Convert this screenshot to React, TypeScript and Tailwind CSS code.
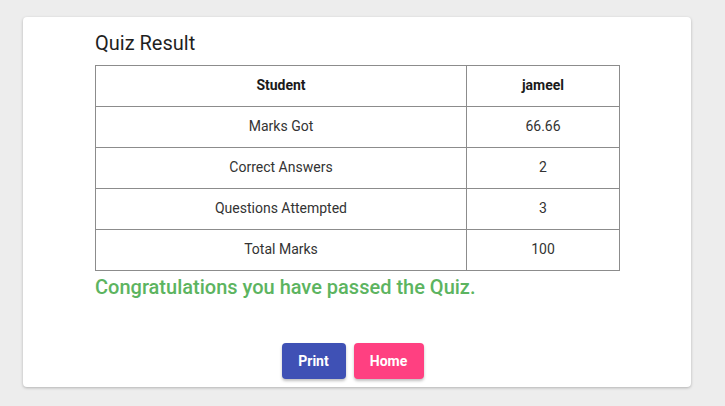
const rows: [string, string][] = [
  ["Marks Got", "66.66"],
  ["Correct Answers", "2"],
  ["Questions Attempted", "3"],
  ["Total Marks", "100"],
];

export default function App() {
  return (
    <div
      className="min-h-[406px] bg-[#ededed] pt-[17px] pb-[19px] pl-[23px] pr-[34px]"
      style={{ fontFamily: "Roboto, 'Liberation Sans', sans-serif" }}
    >
      <div className="bg-white rounded-[4px] shadow-[0_1px_3px_rgba(0,0,0,0.25)] h-[370px] pl-[72px] pr-[71px] pt-[13px]">
        <h2 className="text-[20px] leading-[26px] text-[#1f1f1f] mb-[9px]">Quiz Result</h2>
        <table className="w-[525px] border-collapse text-[14px] text-[#333]">
          <thead>
            <tr className="h-[41px]">
              <th className="border border-[#8c8c8c] w-[371px] font-bold text-[#1a1a1a] pb-[2px]">Student</th>
              <th className="border border-[#8c8c8c] font-bold text-[#1a1a1a] pb-[2px]">jameel</th>
            </tr>
          </thead>
          <tbody>
            {rows.map(([k, v]) => (
              <tr key={k} className="h-[41px]">
                <td className="border border-[#8c8c8c] text-center pb-[2px]">{k}</td>
                <td className="border border-[#8c8c8c] text-center pb-[2px]">{v}</td>
              </tr>
            ))}
          </tbody>
        </table>
        <p className="mt-[3px] text-[20px] leading-[26px] font-medium text-[#5cb460]">
          Congratulations you have passed the Quiz.
        </p>
        <div className="flex justify-center gap-[8px] mt-[43px] pr-[10px]">
          <button className="w-[64px] h-[36px] rounded-[4px] bg-[#3f51b5] text-white text-[14px] font-bold shadow-[0_2px_3px_rgba(0,0,0,0.25)]">
            Print
          </button>
          <button className="w-[70px] h-[36px] rounded-[4px] bg-[#ff4081] text-white text-[14px] font-bold shadow-[0_2px_3px_rgba(0,0,0,0.25)]">
            Home
          </button>
        </div>
      </div>
    </div>
  );
}
